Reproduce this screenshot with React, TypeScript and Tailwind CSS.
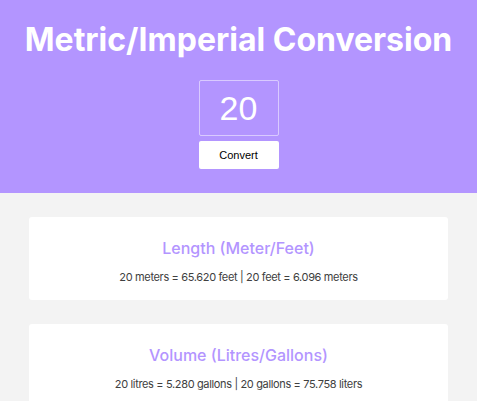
import { useState } from 'react';

const results = [
  { title: 'Length (Meter/Feet)', text: '20 meters = 65.620 feet | 20 feet = 6.096 meters' },
  { title: 'Volume (Litres/Gallons)', text: '20 litres = 5.280 gallons | 20 gallons = 75.758 liters' },
];

export default function App() {
  const [value, setValue] = useState('20');

  return (
    <div className="min-h-screen bg-[#f3f3f3] font-['Inter',sans-serif]">
      <header className="bg-[#b395ff] pt-[21px] pb-[24px] flex flex-col items-center">
        <h1 className="text-[32px] leading-[38px] font-bold text-white">Metric/Imperial Conversion</h1>
        <input
          value={value}
          onChange={(e) => setValue(e.target.value)}
          className="mt-[21px] w-[80px] h-[56px] border border-white/50 rounded-[2px] bg-transparent text-center text-white text-[34px] font-['Liberation_Sans',Arial,sans-serif] outline-none"
        />
        <button className="mt-[5px] w-[80px] h-[28px] bg-white rounded-[2px] text-[11px] text-black font-['Liberation_Sans',Arial,sans-serif]">
          Convert
        </button>
      </header>

      <main className="px-[29px] pt-[24px] pb-6 flex flex-col gap-[24px]">
        {results.map((r) => (
          <section key={r.title} className="bg-white rounded-[3px] pt-[21px] pb-[16px] text-center">
            <h2 className="text-[16px] leading-[20px] font-medium text-[#b395ff]">{r.title}</h2>
            <p className="mt-[13px] text-[11px] leading-[13px] tracking-[-0.35px] text-[#404040]">{r.text}</p>
          </section>
        ))}
      </main>
    </div>
  );
}
